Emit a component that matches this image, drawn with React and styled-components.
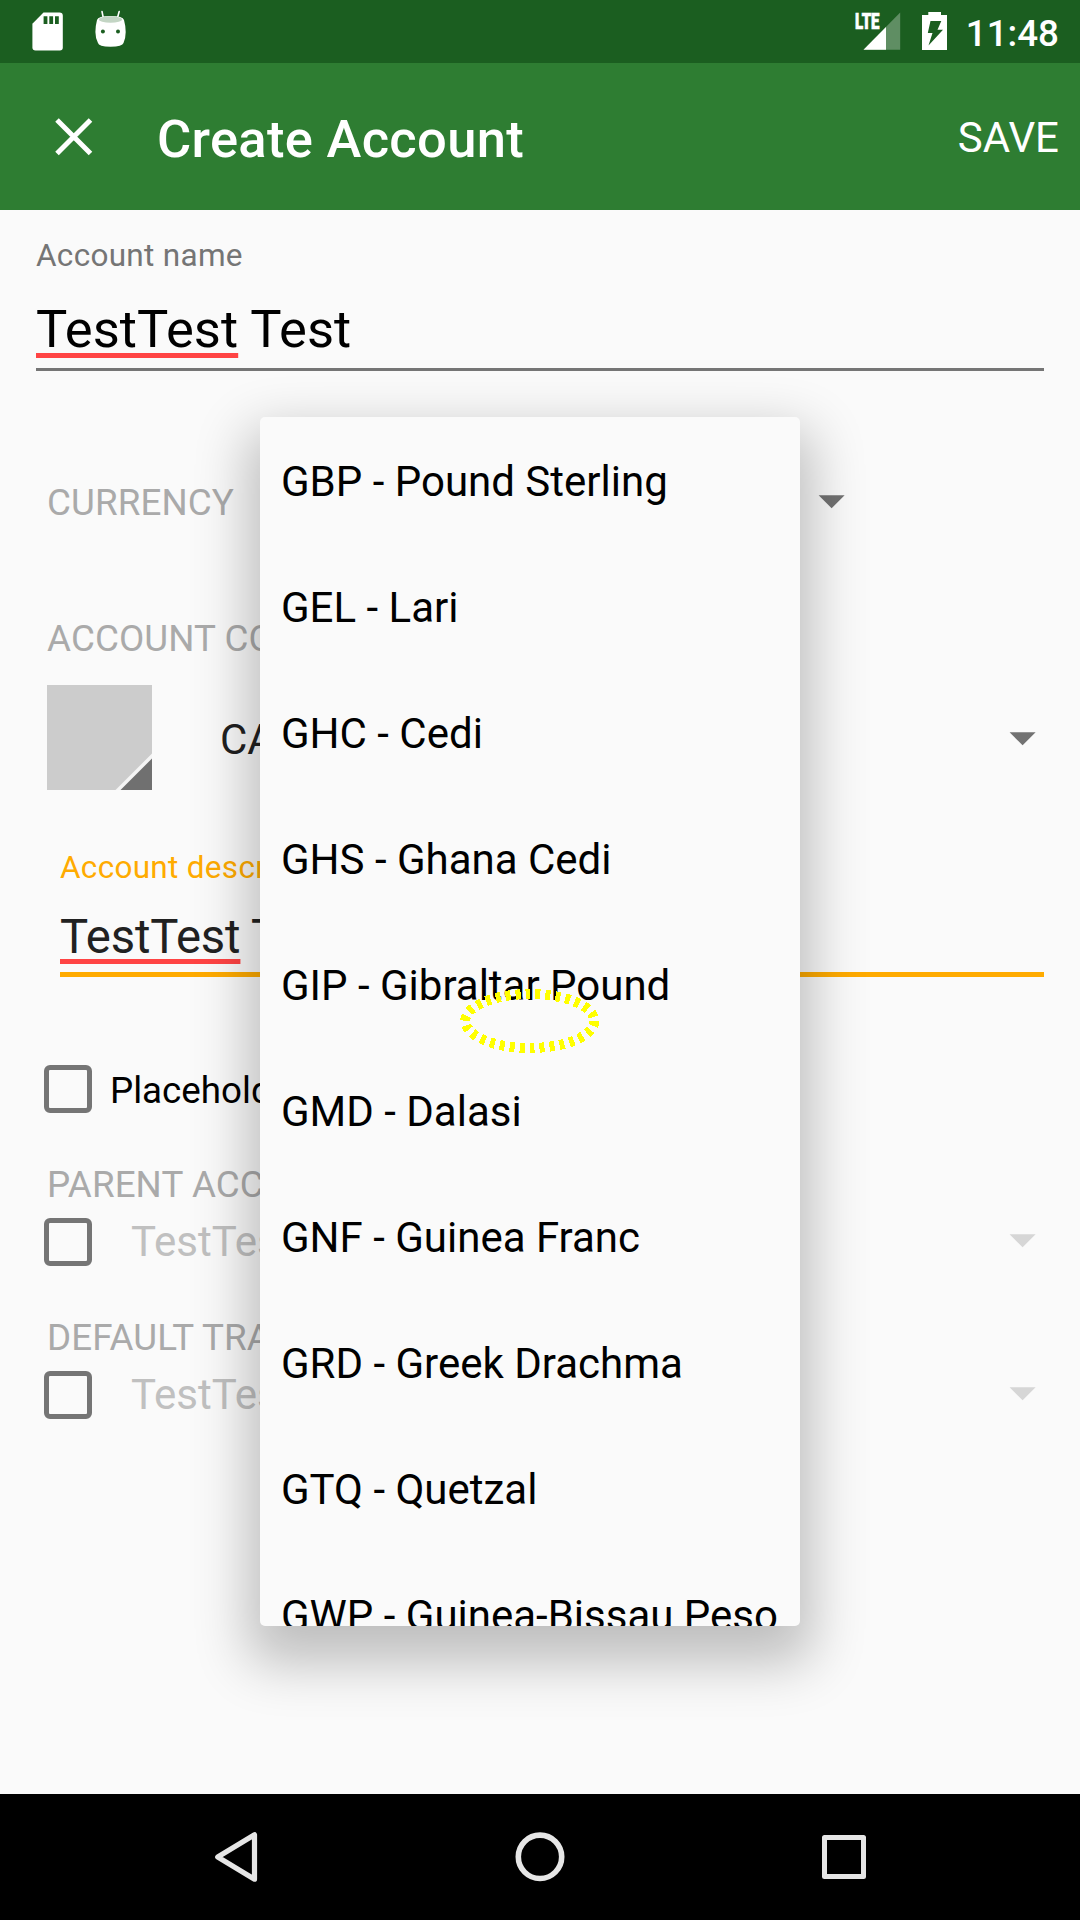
import React from "react";
import styled, { createGlobalStyle } from "styled-components";

const Global = createGlobalStyle`
  * { box-sizing: border-box; }
  body { margin: 0; background: #fafafa; font-family: Roboto, "Noto Sans", sans-serif; }
`;

const Screen = styled.div`
  position: relative;
  width: 1080px;
  height: 1920px;
  display: flex;
  flex-direction: column;
  overflow: hidden;
  background: #fafafa;
  color: #000;
  white-space: nowrap;
`;

const StatusBar = styled.header`
  height: 63px;
  flex: none;
  display: flex;
  justify-content: space-between;
  background: #1b5e20;
  color: #fff;
`;

const Clock = styled.span`
  font-size: 36.75px;
  font-weight: 500;
  line-height: 67px;
  margin-left: 16px;
`;

const StatusIcons = styled.div`
  display: flex;
  padding-right: 21px;
`;

const AppBar = styled.div`
  height: 147px;
  flex: none;
  display: flex;
  align-items: center;
  padding: 0 21px 0 55px;
  background: #2e7d32;
  color: #fff;
`;

const Title = styled.h1`
  flex: 1;
  margin: 4px 0 0 64px;
  font-size: 52.5px;
  font-weight: 500;
  line-height: 62px;
  letter-spacing: 0.3px;
`;

const SaveButton = styled.button`
  padding: 3px 0 0;
  border: 0;
  background: none;
  color: #fff;
  font: 400 42px/50px Roboto, sans-serif;
`;

const Form = styled.main`
  flex: 1;
  padding: 27px 36px 0;
`;

const Field = styled.div`
  margin-left: ${(p) => p.$indent || 0}px;
  margin-top: ${(p) => p.$top || 0}px;
`;

const FieldLabel = styled.div`
  height: 36px;
  font-size: 31.5px;
  line-height: 38px;
  letter-spacing: 0.3px;
  color: ${(p) => p.$color};
`;

const FieldValue = styled.div`
  margin-top: ${(p) => p.$gap}px;
  height: ${(p) => p.$height}px;
  font-size: ${(p) => p.$size}px;
  line-height: ${(p) => p.$line}px;
  letter-spacing: ${(p) => p.$track}px;
  color: ${(p) => p.$color};
  border-bottom: ${(p) => p.$border};
`;

const Misspelled = styled.span`
  text-decoration: underline 5px #ff4444;
  text-underline-offset: 6px;
  text-decoration-skip-ink: none;
`;

const SectionLabel = styled.div`
  height: 44px;
  margin: ${(p) => p.$top || 0}px 0 0 11px;
  font-size: 36.75px;
  line-height: 46px;
  letter-spacing: 0.1px;
  color: #aaa;
`;

const CurrencyRow = styled.div`
  margin-top: 109px;
  display: flex;
  align-items: center;
  justify-content: space-between;
  padding-right: 199px;
`;

const SpinnerRow = styled.div`
  height: ${(p) => p.$height}px;
  margin-top: ${(p) => p.$top}px;
  padding: 0 8px 0 ${(p) => p.$left}px;
  display: flex;
  align-items: center;
`;

const SpinnerText = styled.span`
  flex: 1;
  margin-left: ${(p) => p.$left}px;
  padding-top: ${(p) => p.$nudge || 0}px;
  font-size: 42px;
  line-height: 48px;
  color: ${(p) => p.$color};
`;

const CheckBox = styled.span`
  width: 48px;
  height: 48px;
  flex: none;
  border: 5.5px solid #757575;
  border-radius: 6px;
`;

const CheckLabel = styled.span`
  margin-left: 18px;
  padding-top: 4px;
  font-size: 36.75px;
  line-height: 44px;
`;

const Popup = styled.ul`
  position: absolute;
  left: 260px;
  top: 417px;
  width: 540px;
  height: 1209px;
  margin: 0;
  padding: 0;
  list-style: none;
  overflow: hidden;
  border-radius: 5px;
  background: #fafafa;
  box-shadow: 0 25px 54px 12px rgba(0, 0, 0, 0.245);
`;

const Option = styled.li`
  height: 126px;
  padding: 3px 0 0 21px;
  display: flex;
  align-items: center;
  font-size: 42px;
`;

const TouchRing = styled.svg`
  position: absolute;
  left: 459px;
  top: 988px;
`;

const NavBar = styled.nav`
  height: 126px;
  flex: none;
  background: #000;
`;

const ArrowIcon = styled.svg`
  flex: none;
  margin-top: ${(p) => p.$down || 0}px;
  margin-bottom: ${(p) => p.$up || 0}px;
  fill: ${(p) => (p.$faded ? "#d6d6d6" : "#727272")};
`;

const Arrow = ({ faded, down, up }) => (
  <ArrowIcon width="28" height="14" viewBox="0 0 28 14" $faded={faded} $down={down} $up={up}>
    <path d="M1.6 0.3H27.6L14.6 13.3Z" />
  </ArrowIcon>
);

const SystemIcons = () => (
  <svg width="160" height="63" viewBox="0 0 160 63" fill="#fff">
    <path d="M43.5 12.5H59.5Q62.8 12.5 62.8 15.5V47.5Q62.8 50.5 59.8 50.5H35.5Q32.4 50.5 32.4 47.5V23.7Z" />
    <path d="M43.6 16.2h3.8v7.8h-3.8zM49.3 16.2h3.8v7.8h-3.8zM55 16.2h3.8v7.8H55z" fill="#1b5e20" />
    <path d="M102 11.5L103.3 18M119.2 11.5L117.4 18" stroke="#fff" strokeWidth="1.6" strokeLinecap="round" />
    <path d="M97 20Q98 16 110.5 16T124 20Q125.7 26 125.7 32T123.5 43Q122.5 46.7 110.5 46.7T98 43Q95.4 38 95.4 32T97 20Z" />
    <ellipse cx="110.5" cy="19.5" rx="11.7" ry="3.3" fill="#c3d5c4" />
    <circle cx="102.9" cy="31.5" r="2" fill="#1b5e20" />
    <circle cx="118" cy="31.5" r="2" fill="#1b5e20" />
  </svg>
);

const SignalBattery = () => (
  <svg width="100" height="63" viewBox="850 0 100 63" fill="#fff">
    <text x="855" y="29" fontFamily="Roboto, sans-serif" fontWeight="900" fontSize="21.5" textLength="24.5" lengthAdjust="spacingAndGlyphs" stroke="#fff" strokeWidth="0.7">LTE</text>
    <path d="M900.2 12.5V49.7H863.5Z" opacity="0.3" />
    <path d="M886 27V49.7H863.5Z" />
    <path d="M928.3 12H941V15H947V50H922V15H928.3Z" />
    <path d="M930.5 21H941.3L937.5 29.7H943L928.5 45.5L932.5 33H927.8Z" fill="#1b5e20" />
  </svg>
);

const CloseIcon = () => (
  <svg width="38" height="38" viewBox="0 0 38 38">
    <path d="M2 2L35.5 35.5M35.5 2L2 35.5" stroke="#fff" strokeWidth="5" />
  </svg>
);

const NavIcons = () => (
  <svg width="1080" height="126" viewBox="0 1794 1080 126" fill="none" stroke="#e6e6e6" strokeLinejoin="round">
    <path d="M217.7 1857L254.5 1834.8V1879.2Z" strokeWidth="5.2" />
    <circle cx="540" cy="1856.8" r="21.7" strokeWidth="5.6" />
    <rect x="824.5" y="1837.5" width="39" height="39" strokeWidth="5" />
  </svg>
);

const Swatch = () => (
  <svg width="105" height="105" viewBox="0 0 105 105">
    <rect width="105" height="105" fill="#ccc" />
    <path d="M105 68.5V105H68.5Z" fill="#f5f5f5" />
    <path d="M105 73.5V105H73.5Z" fill="#707070" />
  </svg>
);

const currencies = [
  "GBP - Pound Sterling",
  "GEL - Lari",
  "GHC - Cedi",
  "GHS - Ghana Cedi",
  "GIP - Gibraltar Pound",
  "GMD - Dalasi",
  "GNF - Guinea Franc",
  "GRD - Greek Drachma",
  "GTQ - Quetzal",
  "GWP - Guinea-Bissau Peso",
];

export default function App() {
  return (
    <Screen>
      <Global />
      <StatusBar>
        <SystemIcons />
        <StatusIcons>
          <SignalBattery />
          <Clock>11:48</Clock>
        </StatusIcons>
      </StatusBar>
      <AppBar>
        <CloseIcon />
        <Title>Create Account</Title>
        <SaveButton>SAVE</SaveButton>
      </AppBar>
      <Form>
        <Field>
          <FieldLabel $color="#757575">Account name</FieldLabel>
          <FieldValue $gap={26} $height={72} $size={52.5} $line={60} $track={0.05} $color="#000" $border="3px solid #757575">
            <Misspelled>TestTest</Misspelled> Test
          </FieldValue>
        </Field>
        <CurrencyRow>
          <SectionLabel>CURRENCY</SectionLabel>
          <Arrow />
        </CurrencyRow>
        <SectionLabel $top={92}>ACCOUNT COLOR &amp; TYPE</SectionLabel>
        <SpinnerRow $top={25} $height={105} $left={11}>
          <Swatch />
          <SpinnerText $left={68} $nudge={5} $color="#212121">CASH</SpinnerText>
          <Arrow down={2} />
        </SpinnerRow>
        <Field $indent={24} $top={59}>
          <FieldLabel $color="#ffab00">Account description</FieldLabel>
          <FieldValue $gap={24} $height={68} $size={47.25} $line={56} $track={-0.15} $color="#212121" $border="5px solid #ffab00">
            <Misspelled>TestTest</Misspelled> Test
          </FieldValue>
        </Field>
        <SpinnerRow $top={88} $height={48} $left={8}>
          <CheckBox />
          <CheckLabel>Placeholder account</CheckLabel>
        </SpinnerRow>
        <SectionLabel $top={49}>PARENT ACCOUNT</SectionLabel>
        <SpinnerRow $top={12} $height={48} $left={8}>
          <CheckBox />
          <SpinnerText $left={39} $color="#c0c0c0">TestTest</SpinnerText>
          <Arrow faded up={2} />
        </SpinnerRow>
        <SectionLabel $top={49}>DEFAULT TRANSFER ACCOUNT</SectionLabel>
        <SpinnerRow $top={12} $height={48} $left={8}>
          <CheckBox />
          <SpinnerText $left={39} $color="#c0c0c0">TestTest</SpinnerText>
          <Arrow faded up={2} />
        </SpinnerRow>
      </Form>
      <NavBar>
        <NavIcons />
      </NavBar>
      <Popup>
        {currencies.map((name) => (
          <Option key={name}>{name}</Option>
        ))}
      </Popup>
      <TouchRing width="142" height="66" viewBox="459 988 142 66">
        <ellipse cx="529.8" cy="1021" rx="64.5" ry="27" fill="none" stroke="#ff0" strokeWidth="10" strokeDasharray="5 5" shapeRendering="crispEdges" />
      </TouchRing>
    </Screen>
  );
}
